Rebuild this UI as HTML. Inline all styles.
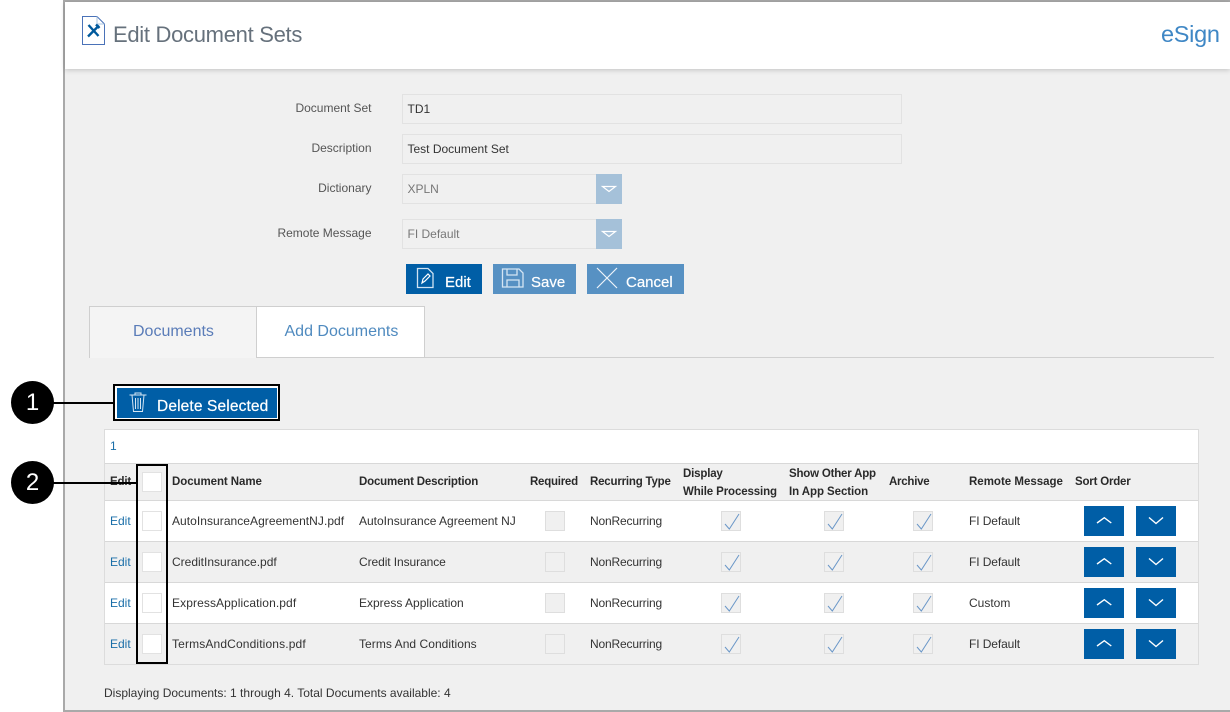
<!DOCTYPE html>
<html><head><meta charset="utf-8"><style>
html,body{margin:0;padding:0;background:#fff}
#p{position:relative;width:1230px;height:712px;overflow:hidden;background:#fff;font-family:"Liberation Sans",sans-serif;font-size:12px;color:#333}
#p div,#p span.t{position:absolute;box-sizing:border-box}
.t{white-space:nowrap;line-height:14px}
.l{color:#555;width:200px;text-align:right;left:171.500px}
.h{font-weight:bold;color:#2a2a2a;font-size:11.500px;letter-spacing:-.18px}
.e{color:#1a6ea8;left:110px}
.nr{letter-spacing:-.17px}
.cb{width:20px;height:20px;background:#fff;border:1px solid #e2e2e2}
.ck{width:20px;height:20px;background:#f0f0f0;border:1px solid #dedede}
.ck svg{position:absolute;left:-1px;top:-1px}
.bt{width:40px;height:30px;background:#005ea6}
.bt svg{position:absolute;left:0;top:0}
.dd{width:26px;height:30px;background:#a5c1d9;left:596px}
.dd svg{position:absolute;left:0;top:0}
.inp{left:402px;background:#f0f0f0;border:1px solid #e2e2e2}
.bk{background:#000}
.w{-webkit-text-stroke:.2px #fff}
</style></head><body><div id="p">
<div style="left:63px;top:0;width:1167px;height:712px;background:#f0f0f0;border:2px solid #a9a9a9;border-right:0"></div>
<div style="left:65px;top:2px;width:1165px;height:67px;background:#fff;box-shadow:0 1px 5px rgba(0,0,0,.2)"></div>
<svg style="position:absolute;left:81px;top:15px" width="26" height="32" viewBox="0 0 26 32"><path d="M1.500 1.500H16L23.500 9V29.500H1.500Z" fill="#fff" stroke="#4a72b8"/><path d="M16 1.500V9H23.500" fill="none" stroke="#a9c4e0"/><path d="M7.500 10L17.500 21M18 10.500L7 21.500M15 9.500L18.500 13" stroke="#00599c" stroke-width="2.400" fill="none"/></svg>
<span class="t" style="left:113px;top:22px;font-size:22px;line-height:26px;color:#66717c;letter-spacing:-.3px">Edit Document Sets</span>
<span class="t" style="left:1161px;top:20px;font-size:23.500px;line-height:28px;color:#3f87c5;letter-spacing:-.3px">eSign</span>

<span class="t l" style="top:101px">Document Set</span>
<span class="t l" style="top:141px">Description</span>
<span class="t l" style="top:181px">Dictionary</span>
<span class="t l" style="top:226px">Remote Message</span>
<div class="inp" style="top:94px;width:500px;height:30px"></div>
<span class="t" style="left:407.500px;top:102px">TD1</span>
<div class="inp" style="top:134px;width:500px;height:30px"></div>
<span class="t" style="left:407.500px;top:142px">Test Document Set</span>
<div class="inp" style="top:174px;width:200px;height:30px"></div>
<span class="t" style="left:407.500px;top:182px;color:#777">XPLN</span>
<div class="dd" style="top:174px"><svg width="26" height="30"><path d="M6.500 12.500H19.500L13 17.500Z" fill="none" stroke="#fff" stroke-width="1.200"/></svg></div>
<div class="inp" style="top:219px;width:200px;height:30px"></div>
<span class="t" style="left:407.500px;top:227px;color:#777">FI Default</span>
<div class="dd" style="top:219px"><svg width="26" height="30"><path d="M6.500 12.500H19.500L13 17.500Z" fill="none" stroke="#fff" stroke-width="1.200"/></svg></div>

<div style="left:406px;top:264px;width:76px;height:30px;background:#005ea6"></div>
<svg style="position:absolute;left:415px;top:266px" width="22" height="24"><path d="M2.500 2.500H13L18 7.500V21.500H2.500Z" fill="none" stroke="#cfe2f2" stroke-width="1.300"/><path d="M7 17L8 13L13 8L15 10L10 15Z" fill="none" stroke="#fff" stroke-width="1.200"/></svg>
<span class="t w" style="left:445px;top:275px;font-size:15px;line-height:16px;color:#fff">Edit</span>
<div style="left:493px;top:264px;width:83px;height:30px;background:#5791c3"></div>
<svg style="position:absolute;left:501px;top:267px" width="24" height="24"><path d="M1.500 2H18L22 6V20H1.500Z" fill="none" stroke="#d5e5f3" stroke-width="1.300"/><path d="M6 2V8H16V2M6 20V13H18V20" fill="none" stroke="#d5e5f3" stroke-width="1.300"/></svg>
<span class="t w" style="left:531px;top:275px;font-size:15px;line-height:16px;color:#fff">Save</span>
<div style="left:587px;top:264px;width:97px;height:30px;background:#5791c3"></div>
<svg style="position:absolute;left:595px;top:266px" width="24" height="24"><path d="M2 2L22 22M22 2L2 22" stroke="#eef4fa" stroke-width="1.200"/></svg>
<span class="t w" style="left:626px;top:275px;font-size:15px;line-height:16px;color:#fff">Cancel</span>

<div style="left:256px;top:357px;width:958px;height:1px;background:#d0d0d0"></div>
<div style="left:89px;top:306px;width:168px;height:52px;background:#f4f4f4;border:1px solid #cfcfcf;border-bottom:0;border-right:0"></div>
<div style="left:256px;top:306px;width:169px;height:52px;background:#fff;border:1px solid #cfcfcf"></div>
<span class="t" style="left:133px;top:323px;font-size:16px;line-height:18px;color:#5a7cb8">Documents</span>
<span class="t" style="left:284.500px;top:323px;font-size:16px;line-height:18px;color:#4f8abf">Add Documents</span>

<div style="left:113px;top:384px;width:167px;height:37px;background:#fff;border:2px solid #000"></div>
<div style="left:117px;top:388px;width:160px;height:30px;background:#005ea6"></div>
<svg style="position:absolute;left:128px;top:391px" width="20" height="24"><path d="M1.500 4H18.500M7 4V2H13V4M4 4L5.500 20.500H14.500L16 4M7.500 7V18M10 7V18M12.500 7V18" fill="none" stroke="#d5e5f3" stroke-width="1"/></svg>
<span class="t w" style="left:157px;top:399px;font-size:15.500px;line-height:16px;color:#fff;letter-spacing:.13px">Delete Selected</span>

<div style="left:104px;top:429px;width:1095px;height:236px;background:#fff;border:1px solid #dcdcdc"></div>
<div style="left:105px;top:463px;width:1093px;height:38px;background:#f0f0f0;border-top:1px solid #d8d8d8;border-bottom:1px solid #d8d8d8"></div>
<div style="left:105px;top:541px;width:1093px;height:42px;background:#f0f0f0;border-top:1px solid #d8d8d8;border-bottom:1px solid #d8d8d8"></div>
<div style="left:105px;top:623px;width:1093px;height:41px;background:#f0f0f0;border-top:1px solid #d8d8d8"></div>
<span class="t e" style="top:439px">1</span>

<span class="t h" style="left:110px;top:475px">Edit</span>
<span class="t h" style="left:172px;top:475px;letter-spacing:-.07px">Document Name</span>
<span class="t h" style="left:359px;top:475px">Document Description</span>
<span class="t h" style="left:530px;top:475px;letter-spacing:-.25px">Required</span>
<span class="t h" style="left:590px;top:475px;letter-spacing:-.2px">Recurring Type</span>
<span class="t h" style="left:683px;top:467px">Display</span>
<span class="t h" style="left:683px;top:485px;letter-spacing:-.12px">While Processing</span>
<span class="t h" style="left:789px;top:467px;letter-spacing:-.2px">Show Other App</span>
<span class="t h" style="left:789px;top:485px;letter-spacing:-.07px">In App Section</span>
<span class="t h" style="left:889px;top:475px;letter-spacing:-.25px">Archive</span>
<span class="t h" style="left:969px;top:475px;letter-spacing:0">Remote Message</span>
<span class="t h" style="left:1075px;top:475px;letter-spacing:-.2px">Sort Order</span>
<div class="cb" style="left:142px;top:472px"></div>

<span class="t e" style="top:514px">Edit</span><div class="cb" style="left:142px;top:511px"></div>
<span class="t" style="left:172px;top:514px;letter-spacing:.05px">AutoInsuranceAgreementNJ.pdf</span>
<span class="t" style="left:359px;top:514px">AutoInsurance Agreement NJ</span>
<div class="ck" style="left:545px;top:511px"></div>
<span class="t nr" style="left:590px;top:514px">NonRecurring</span>
<div class="ck" style="left:721px;top:511px"><svg width="20" height="20"><path d="M4 13L8.300 18L18 3" fill="none" stroke="#6a97c8"/></svg></div>
<div class="ck" style="left:824px;top:511px"><svg width="20" height="20"><path d="M4 13L8.300 18L18 3" fill="none" stroke="#6a97c8"/></svg></div>
<div class="ck" style="left:913px;top:511px"><svg width="20" height="20"><path d="M4 13L8.300 18L18 3" fill="none" stroke="#6a97c8"/></svg></div>
<span class="t" style="left:969px;top:514px;letter-spacing:-.1px">FI Default</span>
<div class="bt" style="left:1084px;top:506px"><svg width="40" height="30"><path d="M13 17L20.300 11.700L27.300 17" fill="none" stroke="#fff" stroke-width="1.400"/></svg></div>
<div class="bt" style="left:1136px;top:506px"><svg width="40" height="30"><path d="M13 11.500L20 17.500L27 11.500" fill="none" stroke="#fff" stroke-width="1.400"/></svg></div>

<span class="t e" style="top:555px">Edit</span><div class="cb" style="left:142px;top:552px"></div>
<span class="t" style="left:172px;top:555px">CreditInsurance.pdf</span>
<span class="t" style="left:359px;top:555px;letter-spacing:-.08px">Credit Insurance</span>
<div class="ck" style="left:545px;top:552px"></div>
<span class="t nr" style="left:590px;top:555px">NonRecurring</span>
<div class="ck" style="left:721px;top:552px"><svg width="20" height="20"><path d="M4 13L8.300 18L18 3" fill="none" stroke="#6a97c8"/></svg></div>
<div class="ck" style="left:824px;top:552px"><svg width="20" height="20"><path d="M4 13L8.300 18L18 3" fill="none" stroke="#6a97c8"/></svg></div>
<div class="ck" style="left:913px;top:552px"><svg width="20" height="20"><path d="M4 13L8.300 18L18 3" fill="none" stroke="#6a97c8"/></svg></div>
<span class="t" style="left:969px;top:555px;letter-spacing:-.1px">FI Default</span>
<div class="bt" style="left:1084px;top:547px"><svg width="40" height="30"><path d="M13 17L20.300 11.700L27.300 17" fill="none" stroke="#fff" stroke-width="1.400"/></svg></div>
<div class="bt" style="left:1136px;top:547px"><svg width="40" height="30"><path d="M13 11.500L20 17.500L27 11.500" fill="none" stroke="#fff" stroke-width="1.400"/></svg></div>

<span class="t e" style="top:596px">Edit</span><div class="cb" style="left:142px;top:593px"></div>
<span class="t" style="left:172px;top:596px;letter-spacing:.1px">ExpressApplication.pdf</span>
<span class="t" style="left:359px;top:596px">Express Application</span>
<div class="ck" style="left:545px;top:593px"></div>
<span class="t nr" style="left:590px;top:596px">NonRecurring</span>
<div class="ck" style="left:721px;top:593px"><svg width="20" height="20"><path d="M4 13L8.300 18L18 3" fill="none" stroke="#6a97c8"/></svg></div>
<div class="ck" style="left:824px;top:593px"><svg width="20" height="20"><path d="M4 13L8.300 18L18 3" fill="none" stroke="#6a97c8"/></svg></div>
<div class="ck" style="left:913px;top:593px"><svg width="20" height="20"><path d="M4 13L8.300 18L18 3" fill="none" stroke="#6a97c8"/></svg></div>
<span class="t" style="left:969px;top:596px">Custom</span>
<div class="bt" style="left:1084px;top:588px"><svg width="40" height="30"><path d="M13 17L20.300 11.700L27.300 17" fill="none" stroke="#fff" stroke-width="1.400"/></svg></div>
<div class="bt" style="left:1136px;top:588px"><svg width="40" height="30"><path d="M13 11.500L20 17.500L27 11.500" fill="none" stroke="#fff" stroke-width="1.400"/></svg></div>

<span class="t e" style="top:637px">Edit</span><div class="cb" style="left:142px;top:634px"></div>
<span class="t" style="left:172px;top:637px;letter-spacing:.14px">TermsAndConditions.pdf</span>
<span class="t" style="left:359px;top:637px;letter-spacing:.05px">Terms And Conditions</span>
<div class="ck" style="left:545px;top:634px"></div>
<span class="t nr" style="left:590px;top:637px">NonRecurring</span>
<div class="ck" style="left:721px;top:634px"><svg width="20" height="20"><path d="M4 13L8.300 18L18 3" fill="none" stroke="#6a97c8"/></svg></div>
<div class="ck" style="left:824px;top:634px"><svg width="20" height="20"><path d="M4 13L8.300 18L18 3" fill="none" stroke="#6a97c8"/></svg></div>
<div class="ck" style="left:913px;top:634px"><svg width="20" height="20"><path d="M4 13L8.300 18L18 3" fill="none" stroke="#6a97c8"/></svg></div>
<span class="t" style="left:969px;top:637px;letter-spacing:-.1px">FI Default</span>
<div class="bt" style="left:1084px;top:629px"><svg width="40" height="30"><path d="M13 17L20.300 11.700L27.300 17" fill="none" stroke="#fff" stroke-width="1.400"/></svg></div>
<div class="bt" style="left:1136px;top:629px"><svg width="40" height="30"><path d="M13 11.500L20 17.500L27 11.500" fill="none" stroke="#fff" stroke-width="1.400"/></svg></div>

<span class="t" style="left:104px;top:686px">Displaying Documents: 1 through 4. Total Documents available: 4</span>

<div style="left:136px;top:464px;width:32px;height:200px;border:2px solid #000"></div>
<div class="bk" style="left:50px;top:402px;width:64px;height:2px"></div>
<div class="bk" style="left:50px;top:482px;width:87px;height:2px"></div>
<div style="left:11px;top:381px;width:43px;height:43px;border-radius:50%;background:#000;color:#fff;font-size:24px;line-height:43px;text-align:center">1</div>
<div style="left:11px;top:461px;width:43px;height:43px;border-radius:50%;background:#000;color:#fff;font-size:24px;line-height:43px;text-align:center">2</div>
</div></body></html>
